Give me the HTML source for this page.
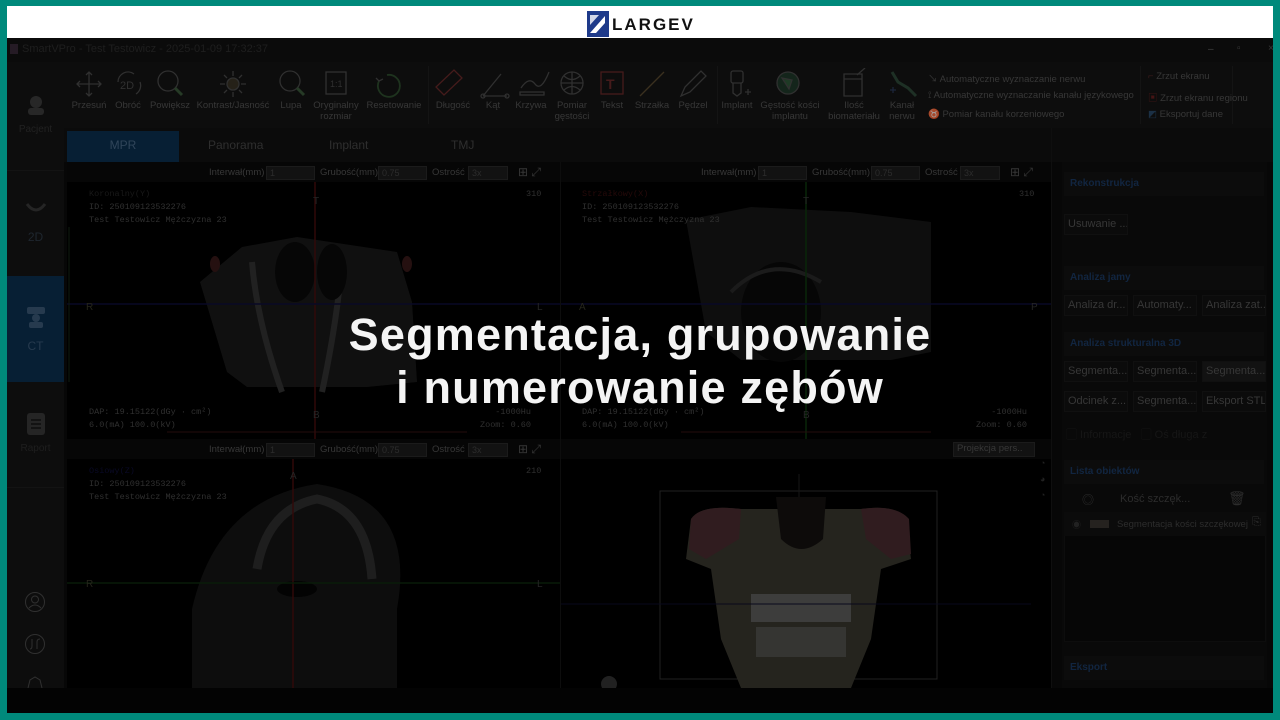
<!DOCTYPE html>
<html><head><meta charset="utf-8">
<style>
*{margin:0;padding:0;box-sizing:border-box}
body{width:1280px;height:720px;background:#00897b;position:relative;overflow:hidden;font-family:"Liberation Sans","Noto Sans CJK SC",sans-serif;}
.a{position:absolute}
.tl{position:absolute;font-size:9.5px;color:#555;text-align:center;line-height:11px;transform:translateX(-50%);white-space:nowrap}
.mono{font-family:"Liberation Mono",monospace;font-size:8.5px;color:#4a4a4a;line-height:13px}
.ctl{position:absolute;font-size:9.5px;color:#555;white-space:nowrap}
.sel{position:absolute;height:14px;background:#1c1c1c;border:1px solid #2a2a2a;font-size:9px;color:#444;padding-left:3px;line-height:12px}
.btn{position:absolute;height:21px;background:#111;border:1px solid #1a1a1a;font-size:11px;color:#555;line-height:19px;padding-left:3px;white-space:nowrap;overflow:hidden}
.hd{position:absolute;left:1064px;width:200px;height:24px;background:#131313;font-size:10px;font-weight:bold;color:#1b3a63;line-height:24px;padding-left:6px}
.big{position:absolute;left:0;width:1280px;text-align:center;color:#f4f4f4;font-weight:bold;font-size:45px;letter-spacing:1.2px}
</style></head><body>
<div class="a" style="left:7px;top:6px;width:1266px;height:32px;background:#fff"></div>
<svg class="a" style="left:587px;top:11px" width="22" height="26" viewBox="0 0 22 26"><rect x="0" y="0" width="22" height="26" fill="#1e3a8a"/><path d="M3 22 L18 5 L18 12 L9 22 Z" fill="#fff"/><path d="M3 4 L12 4 L3 14Z" fill="#fff" opacity=".8"/></svg>
<div class="a" style="left:612px;top:15px;font-size:17px;font-weight:bold;color:#111;letter-spacing:2px">LARGEV</div>
<div class="a" style="left:7px;top:38px;width:1266px;height:650px;background:#0c0c0c"></div>
<div class="a" style="left:7px;top:688px;width:1266px;height:25px;background:#030303"></div>
<div class="a" style="left:7px;top:38px;width:1266px;height:24px;background:#121212"></div>
<div class="a" style="left:10px;top:44px;width:8px;height:10px;background:#3a2a3a"></div>
<div class="a" style="left:22px;top:43px;font-size:11px;color:#2e2e2e">SmartVPro - Test Testowicz - 2025-01-09 17:32:37</div>
<div class="a" style="left:1208px;top:44px;font-size:10px;color:#666">–</div>
<div class="a" style="left:1237px;top:43px;font-size:10px;color:#555">▫</div>
<div class="a" style="left:1268px;top:43px;font-size:10px;color:#555">×</div>
<div class="a" style="left:7px;top:62px;width:57px;height:626px;background:#151515"></div>
<div class="a" style="left:7px;top:170px;width:57px;height:1px;background:#1e1e1e"></div>
<div class="a" style="left:7px;top:276px;width:57px;height:106px;background:#0b3050"></div>
<div class="a" style="left:7px;top:487px;width:57px;height:1px;background:#1e1e1e"></div>
<svg class="a" style="left:25px;top:95px" width="22" height="20"><circle cx="11" cy="7" r="6" fill="#3d3d3d"/><rect x="3" y="13" width="16" height="7" rx="3" fill="#3d3d3d"/></svg>
<div class="a" style="left:7px;top:124px;width:57px;text-align:center;font-size:10px;color:#333">Pacjent</div>
<svg class="a" style="left:25px;top:202px" width="22" height="12"><path d="M2 2 Q11 14 20 2" stroke="#3a3a3a" stroke-width="3" fill="none"/></svg>
<div class="a" style="left:7px;top:230px;width:57px;text-align:center;font-size:12px;color:#2e3b48">2D</div>
<svg class="a" style="left:25px;top:305px" width="22" height="24"><rect x="2" y="2" width="18" height="7" rx="2" fill="#3b5a78"/><circle cx="11" cy="13" r="4" fill="#3b5a78"/><rect x="4" y="17" width="14" height="6" rx="2" fill="#3b5a78"/></svg>
<div class="a" style="left:7px;top:339px;width:57px;text-align:center;font-size:12px;color:#3b5a78">CT</div>
<svg class="a" style="left:25px;top:412px" width="22" height="24"><rect x="2" y="1" width="18" height="22" rx="3" fill="#3a3a3a"/><path d="M6 8h10M6 12h10M6 16h10" stroke="#151515" stroke-width="1.5"/></svg>
<div class="a" style="left:7px;top:443px;width:57px;text-align:center;font-size:10px;color:#2e2e2e">Raport</div>
<svg class="a" style="left:24px;top:591px" width="22" height="22"><circle cx="11" cy="11" r="9.5" stroke="#4a4a4a" fill="none"/><circle cx="11" cy="8.5" r="3.5" stroke="#4a4a4a" fill="none"/><path d="M5 17 Q11 11 17 17" stroke="#4a4a4a" fill="none"/></svg>
<svg class="a" style="left:24px;top:633px" width="22" height="22"><circle cx="11" cy="11" r="9.5" stroke="#4a4a4a" fill="none"/><path d="M8 6v7q0 3-2 3M13 16V9q0-3 3-3" stroke="#4a4a4a" fill="none"/></svg>
<svg class="a" style="left:24px;top:676px" width="22" height="12"><path d="M4 12 L6 4 L11 1 L16 4 L18 12" stroke="#4a4a4a" fill="none"/></svg>
<div class="a" style="left:64px;top:62px;width:1209px;height:66px;background:#141414"></div>
<div class="a" style="left:428px;top:66px;width:1px;height:58px;background:#1f1f1f"></div>
<div class="a" style="left:717px;top:66px;width:1px;height:58px;background:#1f1f1f"></div>
<div class="a" style="left:1140px;top:66px;width:1px;height:58px;background:#1f1f1f"></div>
<div class="a" style="left:1232px;top:66px;width:1px;height:58px;background:#1f1f1f"></div>
<svg class="a" style="left:64px;top:68px" width="860" height="32" stroke="#4a4a4a" fill="none" stroke-width="1.3">
<path d="M25 4v24M13 16h24M22 7l3-3 3 3M22 25l3 3 3-3M16 13l-3 3 3 3M34 13l3 3-3 3"/>
<text x="56" y="21" font-size="11" fill="#4a4a4a" stroke="none" font-family="Liberation Sans">2D</text><path d="M54 14a10 10 0 0 1 16-8M76 14a10 10 0 0 1-4 12"/>
<circle cx="104" cy="13" r="10"/><path d="M111 20l7 7" stroke="#3b5a3b" stroke-width="3"/>
<circle cx="169" cy="16" r="6" fill="#3a3426"/><path d="M169 3v5M169 24v5M156 16h5M177 16h5M160 7l3 3M178 7l-3 3M160 25l3-3M178 25l-3-3"/>
<circle cx="226" cy="13" r="10"/><path d="M233 20l7 7" stroke="#3b5a3b" stroke-width="3"/>
<rect x="262" y="4" width="20" height="22"/><text x="266" y="19" font-size="9" fill="#4a4a4a" stroke="none">1:1</text>
<path d="M323 7a11 11 0 1 1-8 6" stroke="#2f4f2f" stroke-width="1.8"/><path d="M312 10l3 3 4-2"/>
<path d="M380 27l-8-8 18-17 8 8z" stroke="#6b2a2a"/>
<path d="M419 28l18-22M419 28h24"/><circle cx="419" cy="28" r="2"/><circle cx="443" cy="28" r="2"/>
<path d="M457 20q8-12 14-4t14-12"/><rect x="456" y="24" width="24" height="3"/>
<circle cx="508" cy="15" r="11"/><path d="M497 15h22M508 4v22M500 8q8 7 16 0M500 22q8-7 16 0"/>
<rect x="537" y="4" width="22" height="22" stroke="#6b2a2a"/><text x="542" y="21" font-size="14" fill="#6b2a2a" stroke="none" font-weight="bold">T</text>
<path d="M576 28l24-24" stroke="#5a4a30"/>
<path d="M617 28l4-9 16-16 5 5-16 16z"/>
<rect x="667" y="3" width="12" height="12" rx="2"/><path d="M669 15v10l4 3 4-3V15M681 24h6M684 21v6"/>
<circle cx="724" cy="15" r="11" fill="#1f3a2a"/><path d="M718 10l10 2 -3 9z" fill="#2f5a3a"/>
<path d="M780 6h18v22h-18zM780 11h18" /><path d="M793 7l8-7"/>
<path d="M828 4l6 10 10 6 8 8" stroke="#2f4a3a" stroke-width="3"/><path d="M826 22h6M829 19v6" stroke="#2a3a5a"/>
</svg>
<div class="tl" style="left:89px;top:100px">Przesuń</div>
<div class="tl" style="left:128px;top:100px">Obróć</div>
<div class="tl" style="left:170px;top:100px">Powiększ</div>
<div class="tl" style="left:233px;top:100px">Kontrast/Jasność</div>
<div class="tl" style="left:291px;top:100px">Lupa</div>
<div class="tl" style="left:336px;top:100px">Oryginalny<br>rozmiar</div>
<div class="tl" style="left:394px;top:100px">Resetowanie</div>
<div class="tl" style="left:453px;top:100px">Długość</div>
<div class="tl" style="left:493px;top:100px">Kąt</div>
<div class="tl" style="left:531px;top:100px">Krzywa</div>
<div class="tl" style="left:572px;top:100px">Pomiar<br>gęstości</div>
<div class="tl" style="left:612px;top:100px">Tekst</div>
<div class="tl" style="left:652px;top:100px">Strzałka</div>
<div class="tl" style="left:693px;top:100px">Pędzel</div>
<div class="tl" style="left:737px;top:100px">Implant</div>
<div class="tl" style="left:790px;top:100px">Gęstość kości<br>implantu</div>
<div class="tl" style="left:854px;top:100px">Ilość<br>biomateriału</div>
<div class="tl" style="left:902px;top:100px">Kanał<br>nerwu</div>
<div class="ctl" style="left:928px;top:71px">↘ Automatyczne wyznaczanie nerwu</div>
<div class="ctl" style="left:928px;top:90px">⟟ Automatyczne wyznaczanie kanału językowego</div>
<div class="ctl" style="left:928px;top:109px">♉ Pomiar kanału korzeniowego</div>
<div class="ctl" style="left:1148px;top:71px"><span style="color:#5a2a2a">⌐</span> Zrzut ekranu</div>
<div class="ctl" style="left:1148px;top:90px"><span style="color:#6b2020">▣</span> Zrzut ekranu regionu</div>
<div class="ctl" style="left:1148px;top:109px"><span style="color:#2a4a6b">◩</span> Eksportuj dane</div>
<div class="a" style="left:64px;top:128px;width:1209px;height:34px;background:#111"></div>
<div class="a" style="left:67px;top:131px;width:112px;height:31px;background:#0b3050;color:#4a6a8a;font-size:12px;text-align:center;line-height:28px">MPR</div>
<div class="a" style="left:208px;top:138px;font-size:12px;color:#484848">Panorama</div>
<div class="a" style="left:329px;top:138px;font-size:12px;color:#484848">Implant</div>
<div class="a" style="left:451px;top:138px;font-size:12px;color:#484848">TMJ</div>
<div class="a" style="left:67px;top:162px;width:984px;height:526px;background:#000"></div>
<div class="a" style="left:67px;top:162px;width:984px;height:20px;background:#0a0a0a"></div>
<div class="a" style="left:67px;top:439px;width:984px;height:20px;background:#0a0a0a"></div>
<div class="a" style="left:560px;top:162px;width:1px;height:526px;background:#151515"></div>
<div class="ctl" style="left:209px;top:167px">Interwał(mm)</div><div class="sel" style="left:266px;top:166px;width:49px">1</div>
<div class="ctl" style="left:320px;top:167px">Grubość(mm)</div><div class="sel" style="left:378px;top:166px;width:49px">0.75</div>
<div class="ctl" style="left:432px;top:167px">Ostrość</div><div class="sel" style="left:468px;top:166px;width:40px">3x</div>
<div class="ctl" style="left:518px;top:165px;font-size:12px">⊞ ⤢</div>
<div class="ctl" style="left:701px;top:167px">Interwał(mm)</div><div class="sel" style="left:758px;top:166px;width:49px">1</div>
<div class="ctl" style="left:812px;top:167px">Grubość(mm)</div><div class="sel" style="left:871px;top:166px;width:49px">0.75</div>
<div class="ctl" style="left:925px;top:167px">Ostrość</div><div class="sel" style="left:960px;top:166px;width:40px">3x</div>
<div class="ctl" style="left:1010px;top:165px;font-size:12px">⊞ ⤢</div>
<div class="ctl" style="left:209px;top:444px">Interwał(mm)</div><div class="sel" style="left:266px;top:443px;width:49px">1</div>
<div class="ctl" style="left:320px;top:444px">Grubość(mm)</div><div class="sel" style="left:378px;top:443px;width:49px">0.75</div>
<div class="ctl" style="left:432px;top:444px">Ostrość</div><div class="sel" style="left:468px;top:443px;width:40px">3x</div>
<div class="ctl" style="left:518px;top:442px;font-size:12px">⊞ ⤢</div>
<div class="sel" style="left:953px;top:442px;width:82px;height:15px;font-size:9.5px;color:#555">Projekcja pers..</div>
<svg class="a" style="left:67px;top:182px" width="493" height="257">
<path d="M133 100 L175 65 L230 55 L330 70 L345 120 L350 200 L300 205 L180 205 L160 190 Z" fill="#1a1a1a"/>
<path d="M185 80 q5 60 30 130" stroke="#333" stroke-width="6" fill="none"/><path d="M275 80 q-5 60 -20 130" stroke="#333" stroke-width="6" fill="none"/>
<ellipse cx="228" cy="90" rx="20" ry="30" fill="#0a0a0a"/><ellipse cx="265" cy="90" rx="15" ry="28" fill="#0a0a0a"/>
<ellipse cx="148" cy="82" rx="5" ry="8" fill="#3a1a1a"/><ellipse cx="340" cy="82" rx="5" ry="8" fill="#3a1a1a"/>
<line x1="248" y1="0" x2="248" y2="257" stroke="#4a0f0f" stroke-width="1.5"/>
<line x1="0" y1="122" x2="493" y2="122" stroke="#0f0f3a" stroke-width="1.5"/>
<line x1="2" y1="45" x2="2" y2="200" stroke="#1a2a1a"/>
<line x1="100" y1="250" x2="400" y2="250" stroke="#3a1515"/>
<text x="246" y="22" font-size="10" fill="#3a3a3a">T</text><text x="246" y="236" font-size="10" fill="#3a3a3a">B</text>
<text x="19" y="128" font-size="10" fill="#3a3a2a">R</text><text x="470" y="128" font-size="10" fill="#3a3a3a">L</text>
</svg>
<div class="a mono" style="left:89px;top:188px"><span style="color:#262626">Koronalny(Y)</span><br>ID: 250109123532276<br>Test Testowicz Mężczyzna 23</div>
<div class="a mono" style="left:526px;top:188px">310</div>
<div class="a mono" style="left:89px;top:406px">DAP: 19.15122(dGy · cm²)<br>6.0(mA) 100.0(kV)</div>
<div class="a mono" style="left:480px;top:406px;text-align:right">-1000Hu<br>Zoom: 0.60</div>
<svg class="a" style="left:561px;top:182px" width="490" height="257">
<path d="M125 38 L190 25 L290 30 L370 40 L370 170 L330 178 L180 178 L145 150 Z" fill="#161616"/>
<ellipse cx="220" cy="130" rx="40" ry="50" fill="#0a0a0a"/><path d="M170 110 q40 -40 90 -10" stroke="#2a2a2a" stroke-width="4" fill="none"/>
<line x1="245" y1="0" x2="245" y2="257" stroke="#0f3a0f" stroke-width="1.5"/>
<line x1="0" y1="122" x2="490" y2="122" stroke="#0f0f3a" stroke-width="1.5"/>
<line x1="120" y1="250" x2="370" y2="250" stroke="#3a1515"/>
<text x="242" y="22" font-size="10" fill="#3a3a3a">T</text><text x="242" y="236" font-size="10" fill="#3a3a3a">B</text>
<text x="18" y="128" font-size="10" fill="#3a3a2a">A</text><text x="470" y="128" font-size="10" fill="#3a3a3a">P</text>
</svg>
<div class="a mono" style="left:582px;top:188px"><span style="color:#3a0f0f">Strzałkowy(X)</span><br>ID: 250109123532276<br>Test Testowicz Mężczyzna 23</div>
<div class="a mono" style="left:1019px;top:188px">310</div>
<div class="a mono" style="left:582px;top:406px">DAP: 19.15122(dGy · cm²)<br>6.0(mA) 100.0(kV)</div>
<div class="a mono" style="left:976px;top:406px;text-align:right">-1000Hu<br>Zoom: 0.60</div>
<svg class="a" style="left:67px;top:459px" width="493" height="229">
<path d="M125 150 Q150 40 250 25 Q350 40 330 150 L330 229 L125 229 Z" fill="#141414"/>
<path d="M190 110 Q200 50 250 40 Q300 50 305 120" stroke="#2e2e2e" stroke-width="9" fill="none"/>
<ellipse cx="230" cy="130" rx="20" ry="8" fill="#050505"/>
<line x1="226" y1="0" x2="226" y2="229" stroke="#4a0f0f" stroke-width="1.5"/>
<line x1="0" y1="124" x2="493" y2="124" stroke="#0f2a0f" stroke-width="1.5"/>
<text x="223" y="20" font-size="10" fill="#3a3a3a">A</text>
<text x="19" y="128" font-size="10" fill="#3a3a2a">R</text><text x="470" y="128" font-size="10" fill="#3a3a3a">L</text>
</svg>
<div class="a mono" style="left:89px;top:465px"><span style="color:#0f0f3a">Osiowy(Z)</span><br>ID: 250109123532276<br>Test Testowicz Mężczyzna 23</div>
<div class="a mono" style="left:526px;top:465px">210</div>
<svg class="a" style="left:561px;top:459px" width="490" height="229">
<rect x="99" y="32" width="277" height="188" fill="none" stroke="#333"/>
<line x1="238" y1="15" x2="238" y2="229" stroke="#222"/>
<path d="M130 60 Q140 45 180 50 L300 50 Q335 45 345 60 L350 100 L320 110 L310 180 L290 229 L180 229 L160 180 L150 110 L125 100 Z" fill="#3a382f"/>
<path d="M130 60 Q140 45 180 50 L178 80 L145 100 L128 90 Z" fill="#4a2c30"/>
<path d="M300 50 Q335 45 348 60 L350 95 L330 100 L305 80 Z" fill="#4a2c30"/>
<path d="M215 38 L265 38 L262 80 Q240 100 220 80 Z" fill="#141210"/>
<rect x="190" y="135" width="100" height="28" fill="#5e5e5c"/>
<rect x="195" y="168" width="90" height="30" fill="#52524e"/>
<line x1="0" y1="145" x2="470" y2="145" stroke="#0f0f2a"/>
<circle cx="48" cy="225" r="8" fill="#333"/>
</svg>
<div class="a" style="left:1040px;top:455px;font-size:9px;color:#333;line-height:16px">◔<br>◕<br>◔</div>
<div class="a" style="left:1051px;top:128px;width:1px;height:560px;background:#181818"></div>
<div class="a" style="left:1062px;top:162px;width:205px;height:526px;background:#0e0e0e"></div>
<div class="hd" style="top:172px">Rekonstrukcja</div>
<div class="btn" style="left:1064px;top:214px;width:64px">Usuwanie ...</div>
<div class="hd" style="top:266px">Analiza jamy</div>
<div class="btn" style="left:1064px;top:295px;width:64px">Analiza dr...</div>
<div class="btn" style="left:1133px;top:295px;width:64px">Automaty...</div>
<div class="btn" style="left:1202px;top:295px;width:64px">Analiza zat...</div>
<div class="hd" style="top:332px">Analiza strukturalna 3D</div>
<div class="btn" style="left:1064px;top:361px;width:64px">Segmenta...</div>
<div class="btn" style="left:1133px;top:361px;width:64px">Segmenta...</div>
<div class="btn" style="left:1202px;top:361px;width:64px;background:#1c1c1c">Segmenta...</div>
<div class="btn" style="left:1064px;top:391px;width:64px">Odcinek z...</div>
<div class="btn" style="left:1133px;top:391px;width:64px">Segmenta...</div>
<div class="btn" style="left:1202px;top:391px;width:64px">Eksport STL</div>
<div class="a" style="left:1066px;top:426px;font-size:11px;color:#222">▢ Informacje &nbsp; ▢ Oś długa z</div>
<div class="hd" style="top:460px">Lista obiektów</div>
<div class="a" style="left:1082px;top:491px;font-size:12px;color:#444">◎</div>
<div class="a" style="left:1120px;top:493px;font-size:11px;color:#444">Kość szczęk...</div>
<div class="a" style="left:1228px;top:490px;font-size:14px;color:#444">🗑</div>
<div class="a" style="left:1064px;top:512px;width:202px;height:130px;background:#0a0a0a;border:1px solid #141414"></div>
<div class="a" style="left:1064px;top:512px;width:202px;height:24px;background:#121212"></div>
<div class="a" style="left:1072px;top:518px;font-size:9px;color:#333">◉</div>
<div class="a" style="left:1090px;top:520px;width:19px;height:8px;background:#3a3530"></div>
<div class="a" style="left:1117px;top:519px;font-size:9.5px;color:#444">Segmentacja kości szczękowej</div>
<div class="a" style="left:1252px;top:516px;font-size:11px;color:#444">⎘</div>
<div class="hd" style="top:656px">Eksport</div>
<!-- dim overlay -->
<div class="a" style="left:7px;top:38px;width:1266px;height:650px;background:rgba(0,0,0,0.35)"></div>
<div class="big" style="top:309px">Segmentacja, grupowanie</div>
<div class="big" style="top:362px">i numerowanie zębów</div>
</body></html>
